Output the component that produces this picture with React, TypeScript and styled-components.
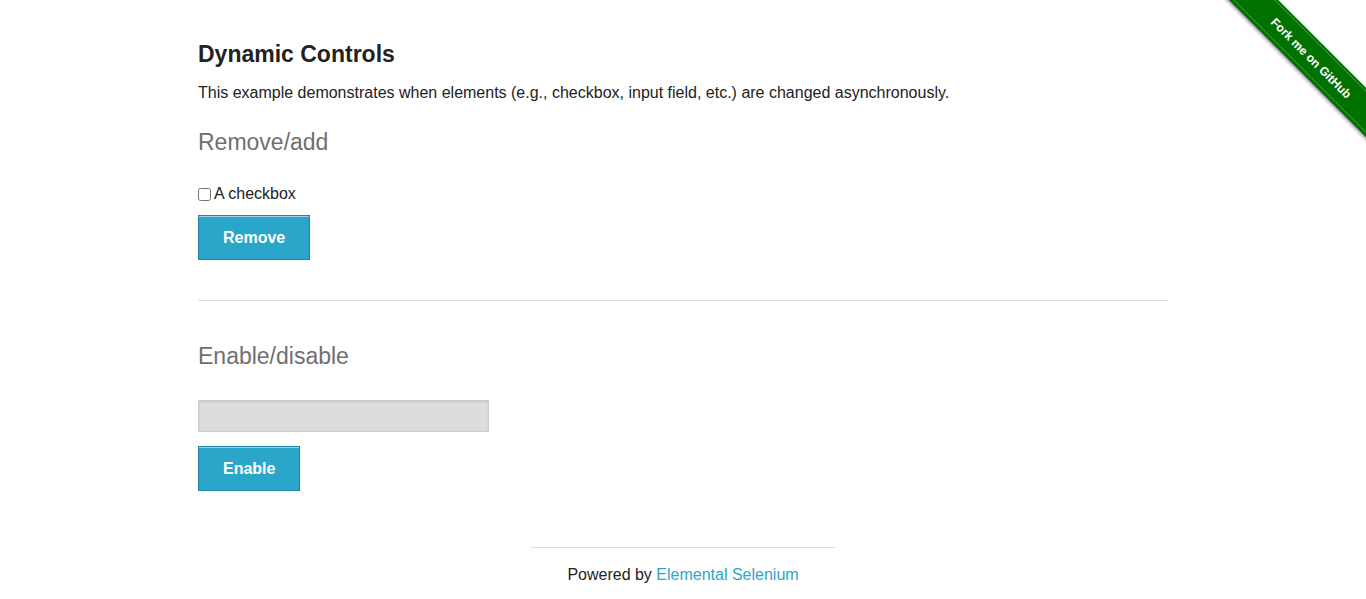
import React from "react";
import styled, { createGlobalStyle } from "styled-components";

const GlobalStyle = createGlobalStyle`
  body {
    margin: 0;
    background: #ffffff;
    font-family: "Liberation Sans", Arial, sans-serif;
    color: #222222;
  }
`;

const Page = styled.div`
  position: relative;
  min-height: 599px;
  overflow: hidden;
`;

const Ribbon = styled.a`
  position: absolute;
  top: 0;
  right: 0;
  width: 149px;
  height: 149px;
  overflow: hidden;
  text-decoration: none;
`;

const RibbonBand = styled.span`
  position: absolute;
  left: -17px;
  top: 39px;
  width: 220px;
  height: 35px;
  box-sizing: border-box;
  background: #007200;
  transform: rotate(45deg);
  display: flex;
  align-items: center;
  justify-content: center;
  box-shadow: 0 2px 3px rgba(0, 0, 0, 0.35);

  &::before,
  &::after {
    content: "";
    position: absolute;
    left: 0;
    right: 0;
    height: 1px;
    border-top: 1px dotted rgba(255, 255, 255, 0.45);
  }
  &::before {
    top: 2px;
  }
  &::after {
    bottom: 2px;
  }
`;

const RibbonText = styled.span`
  color: #ffffff;
  font-family: "Liberation Sans", Arial, sans-serif;
  font-weight: bold;
  font-size: 12px;
  padding-left: 4px;
`;

const Container = styled.div`
  width: 970px;
  margin: 0 auto;
  padding-top: 41px;
`;

const Title = styled.h3`
  margin: 0;
  font-size: 23px;
  line-height: 26px;
  font-weight: bold;
  color: #222222;
`;

const Intro = styled.p`
  margin: 16px 0 0;
  font-size: 16px;
  line-height: 20px;
`;

const SectionTitle = styled.h4<{ $gap: number }>`
  margin: ${(p) => p.$gap}px 0 0;
  font-size: 23px;
  line-height: 26px;
  font-weight: normal;
  color: #6f6f6f;
`;

const CheckRow = styled.label`
  display: flex;
  align-items: center;
  margin-top: 29px;
  font-size: 16px;
  line-height: 20px;
`;

const Check = styled.input`
  width: 13px;
  height: 13px;
  margin: 0 3px 0 0;
`;

const Button = styled.button<{ $gap: number }>`
  display: block;
  margin-top: ${(p) => p.$gap}px;
  height: 45px;
  padding: 0 24px;
  background: #2ba6cb;
  border: 1px solid #2284a1;
  color: #ffffff;
  font-family: "Liberation Sans", Arial, sans-serif;
  font-weight: bold;
  font-size: 16px;
  box-shadow: inset 0 1px 0 rgba(255, 255, 255, 0.5);
  cursor: pointer;
`;

const Divider = styled.hr`
  margin: 40px 0 0;
  border: 0;
  border-top: 1px solid #dddddd;
`;

const TextInput = styled.input`
  display: block;
  box-sizing: border-box;
  width: 291px;
  height: 32px;
  margin-top: 31px;
  background: #dddddd;
  border: 1px solid #cccccc;
  box-shadow: inset 0 1px 2px rgba(0, 0, 0, 0.1);
`;

const Footer = styled.footer`
  width: 304px;
  margin: 56px auto 0;
  border-top: 1px solid #dddddd;
  padding-top: 17px;
  text-align: center;
  font-size: 16px;
  line-height: 20px;
  color: #222222;
`;

const FooterLink = styled.a`
  color: #2ba6cb;
  text-decoration: none;
`;

export default function App() {
  return (
    <Page>
      <GlobalStyle />
      <Ribbon href="#">
        <RibbonBand>
          <RibbonText>Fork me on GitHub</RibbonText>
        </RibbonBand>
      </Ribbon>
      <Container>
        <Title>Dynamic Controls</Title>
        <Intro>
          This example demonstrates when elements (e.g., checkbox, input field,
          etc.) are changed asynchronously.
        </Intro>
        <SectionTitle $gap={26}>Remove/add</SectionTitle>
        <CheckRow>
          <Check type="checkbox" />A checkbox
        </CheckRow>
        <Button $gap={11}>Remove</Button>
        <Divider />
        <SectionTitle $gap={42}>Enable/disable</SectionTitle>
        <TextInput type="text" disabled />
        <Button $gap={14}>Enable</Button>
      </Container>
      <Footer>
        Powered by <FooterLink href="#">Elemental Selenium</FooterLink>
      </Footer>
    </Page>
  );
}
